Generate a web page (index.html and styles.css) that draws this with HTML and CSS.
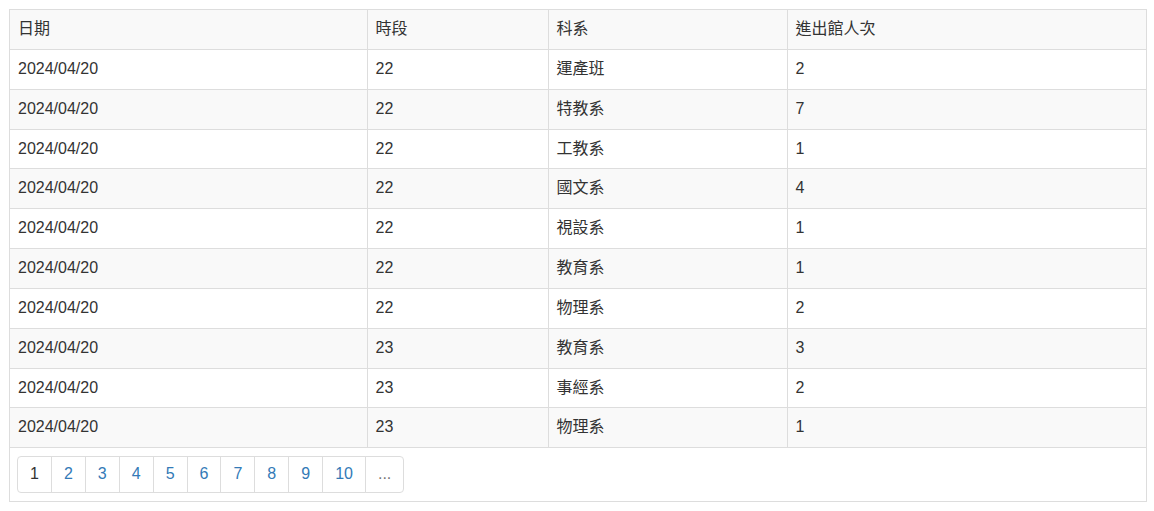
FILE: index.html
```html
<!DOCTYPE html>
<html lang="zh-Hant">
<head>
<meta charset="utf-8">
<link rel="stylesheet" href="styles.css">
</head>
<body>
<div class="panel">
  <table class="grid">
    <thead>
      <tr>
        <th class="c-date">日期</th>
        <th class="c-hour">時段</th>
        <th class="c-dept">科系</th>
        <th class="c-count">進出館人次</th>
      </tr>
    </thead>
    <tbody>
      <tr><td>2024/04/20</td><td>22</td><td>運產班</td><td>2</td></tr>
      <tr><td>2024/04/20</td><td>22</td><td>特教系</td><td>7</td></tr>
      <tr><td>2024/04/20</td><td>22</td><td>工教系</td><td>1</td></tr>
      <tr><td>2024/04/20</td><td>22</td><td>國文系</td><td>4</td></tr>
      <tr><td>2024/04/20</td><td>22</td><td>視設系</td><td>1</td></tr>
      <tr><td>2024/04/20</td><td>22</td><td>教育系</td><td>1</td></tr>
      <tr><td>2024/04/20</td><td>22</td><td>物理系</td><td>2</td></tr>
      <tr><td>2024/04/20</td><td>23</td><td>教育系</td><td>3</td></tr>
      <tr><td>2024/04/20</td><td>23</td><td>事經系</td><td>2</td></tr>
      <tr><td>2024/04/20</td><td>23</td><td>物理系</td><td>1</td></tr>
    </tbody>
  </table>
  <div class="footer">
    <ul class="pager">
      <li class="current"><span>1</span></li>
      <li><a href="#">2</a></li>
      <li><a href="#">3</a></li>
      <li><a href="#">4</a></li>
      <li><a href="#">5</a></li>
      <li><a href="#">6</a></li>
      <li><a href="#">7</a></li>
      <li><a href="#">8</a></li>
      <li><a href="#">9</a></li>
      <li><a href="#">10</a></li>
      <li class="more"><a href="#">...</a></li>
    </ul>
  </div>
</div>
</body>
</html>
```
FILE: styles.css
```css
html, body {
  margin: 0;
  padding: 0;
  background: #fff;
}
body {
  padding: 9px;
  font-family: "Liberation Sans", Arial, "Noto Sans CJK TC", sans-serif;
  font-size: 16px;
  color: #333;
}
.panel {
  width: 1136px;
  border: 1px solid #ddd;
}
.grid {
  width: 100%;
  border-collapse: collapse;
  table-layout: fixed;
}
.grid th, .grid td {
  box-sizing: border-box;
  padding: 8px;
  border: 1px solid #ddd;
  text-align: left;
  font-weight: normal;
  vertical-align: top;
  line-height: 1.42857;
}
.grid th {
  border-top: none;
  background: #f9f9f9;
}
.grid th:first-child, .grid td:first-child { border-left: none; }
.grid th:last-child, .grid td:last-child { border-right: none; }
.grid tbody tr:nth-child(even) td { background: #f9f9f9; }
.c-date { width: 357px; }
.c-hour { width: 181px; }
.c-dept { width: 239px; }
.footer {
  padding: 8px 7px;
}
.pager {
  list-style: none;
  margin: 0;
  padding: 0;
  display: flex;
}
.pager li {
  margin-left: -1px;
}
.pager li:first-child { margin-left: 0; }
.pager a, .pager span {
  display: block;
  padding: 6px 12px;
  line-height: 1.42857;
  border: 1px solid #ddd;
  text-decoration: none;
  color: #337ab7;
  background: #fff;
}
.pager li:first-child span {
  border-radius: 4px 0 0 4px;
  color: #333;
}
.pager li:last-child a {
  border-radius: 0 4px 4px 0;
  color: #777;
}
```
